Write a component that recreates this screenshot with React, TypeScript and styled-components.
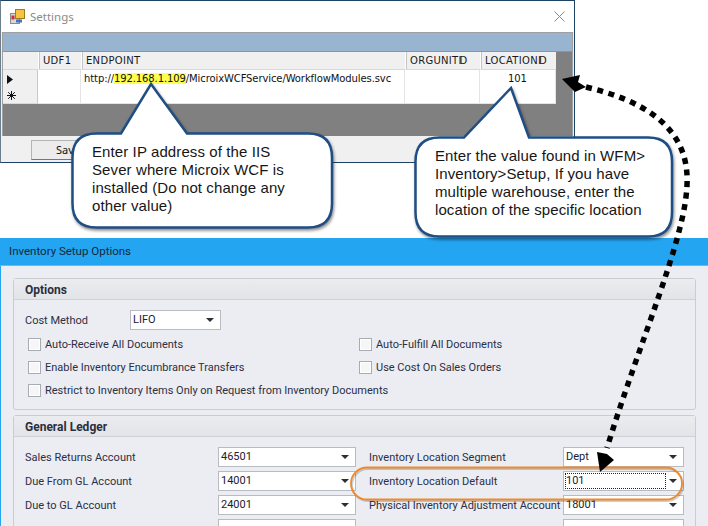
import React from 'react';
import styled, { createGlobalStyle } from 'styled-components';

const GlobalStyle = createGlobalStyle`
  html, body { margin: 0; padding: 0; background: #fff; }
  * { box-sizing: border-box; }
`;

const Page = styled.div`
  position: relative;
  width: 708px;
  height: 526px;
  overflow: hidden;
  background: #fff;
  font-family: 'DejaVu Sans', sans-serif;
`;

/* ---------- settings window ---------- */
const SettingsWindow = styled.div`
  width: 575px;
  height: 163px;
  background: #f0f0f0;
  border: 1px solid #1d4364;
  border-left-color: #6d7f8c;
  display: flex;
  flex-direction: column;
`;

const TitleBar = styled.div`
  height: 31px;
  flex: none;
  background: #fff;
  display: flex;
  align-items: center;
  padding: 0 9px 0 9px;
  gap: 5px;
`;

const TitleText = styled.span`
  flex: 1;
  font: 11.5px 'Noto Sans', sans-serif;
  color: #8a8a8a;
`;

const GridFrame = styled.div`
  height: 104px;
  flex: none;
  margin: 0 1px 0 1px;
  border: 1px solid #a0a0a0;
  border-bottom: none;
  background: #808080;
  display: flex;
  flex-direction: column;
`;

const BlueStrip = styled.div`
  height: 19px;
  flex: none;
  background: #99b4d1;
  border-bottom: 1px solid #8496aa;
`;

const GridRow = styled.div<{ $height: number }>`
  height: ${(p) => p.$height}px;
  flex: none;
  width: 553px;
  display: grid;
  grid-template-columns: 35px 43px 324px 75px 76px;
`;

const HeadCell = styled.div<{ $first?: boolean }>`
  background: #f0f0f0;
  border-left: ${(p) => (p.$first ? 'none' : '1px solid #fff')};
  box-shadow: ${(p) => (p.$first ? 'none' : 'inset 1px 0 0 #c4c4c4')};
  border-bottom: 1px solid #d8d8d8;
  padding-left: 4px;
  font-size: 10px;
  letter-spacing: 0.3px;
  line-height: 17px;
  color: #1a1a1a;
  white-space: nowrap;
`;

const TightId = styled.span`
  letter-spacing: -2px;
  margin-right: 2px;
`;

const RowHead = styled.div`
  background: #f0f0f0;
  border-bottom: 1px solid #d8d8d8;
  border-right: 1px solid #c8c8c8;
  display: flex;
  align-items: center;
  padding-left: 4px;
`;

const Cell = styled.div<{ $center?: boolean }>`
  background: #fff;
  border-right: 1px solid #e4e4e4;
  border-bottom: 1px solid #e4e4e4;
  padding-left: ${(p) => (p.$center ? 0 : 3)}px;
  text-align: ${(p) => (p.$center ? 'center' : 'left')};
  font-size: 10px;
  letter-spacing: -0.1px;
  line-height: 18px;
  color: #111;
  white-space: nowrap;
`;

const Marked = styled.span`
  background: #ffff4d;
`;

const ButtonBar = styled.div`
  flex: 1;
  padding: 4px 0 0 30px;
`;

const SaveButton = styled.div`
  width: 90px;
  height: 20px;
  background: #ececec;
  border: 1px solid #b4b4b4;
  border-right-color: #777;
  border-bottom-color: #777;
  padding-left: 24px;
  font: 11px/18px 'Noto Sans', sans-serif;
  color: #111;
`;

/* ---------- inventory dialog ---------- */
const Dialog = styled.div`
  margin-top: 75px;
  height: 288px;
  background: #ebedf2;
  border-left: 1px solid #24a5f2;
  display: flex;
  flex-direction: column;
  font-family: Roboto, 'Noto Sans', sans-serif;
`;

const DialogHeader = styled.div`
  height: 28px;
  flex: none;
  margin-left: -1px;
  background: #24a5f2;
  border-bottom: 1px solid #6fb9e8;
  padding-left: 9px;
  font-size: 11.5px;
  line-height: 26px;
  color: #12283a;
`;

const DialogBody = styled.div`
  padding: 12px 12px 0 12px;
  display: flex;
  flex-direction: column;
  gap: 5px;
`;

const Panel = styled.section<{ $height: number }>`
  height: ${(p) => p.$height}px;
  flex: none;
  width: 683px;
  border: 1px solid #c9ccd1;
  border-radius: 3px;
`;

const PanelTitle = styled.h2`
  margin: 0;
  height: 21px;
  padding-left: 11px;
  background: linear-gradient(#ebecef, #e3e4e8);
  border-bottom: 1px solid #cfd1d6;
  font-size: 12px;
  font-weight: 700;
  line-height: 22px;
  color: #2a2f3e;
`;

const Label = styled.span`
  font-size: 11px;
  color: #2b2f45;
  white-space: nowrap;
`;

const Select = styled.div<{ $width: number; $focus?: boolean }>`
  position: relative;
  width: ${(p) => p.$width}px;
  height: 20px;
  background: #fff;
  border: 1px solid #b8bbc2;
  padding-left: 2px;
  font-size: 11px;
  line-height: 18px;
  color: #1c2030;
`;

const FocusBox = styled.span`
  position: absolute;
  left: 1px;
  top: 1px;
  bottom: 1px;
  right: 17px;
  border: 1px dotted #222;
`;

const Caret = styled.span`
  position: absolute;
  right: 6px;
  top: 7px;
  border-left: 4px solid transparent;
  border-right: 4px solid transparent;
  border-top: 4px solid #2b2f3a;
`;

const CostRow = styled.div`
  display: flex;
  align-items: center;
  padding: 10px 0 0 11px;
  gap: 0;
`;

const CostLabel = styled(Label)`
  width: 105px;
`;

const CheckGrid = styled.div`
  display: grid;
  grid-template-columns: 331px 1fr;
  grid-auto-rows: 23px;
  padding: 0 0 0 14px;
  margin-top: 3px;
`;

const CheckItem = styled.div<{ $wide?: boolean }>`
  display: flex;
  align-items: center;
  gap: 4px;
  grid-column: ${(p) => (p.$wide ? '1 / 3' : 'auto')};
`;

const CheckBox = styled.span`
  width: 13px;
  height: 13px;
  flex: none;
  background: #f6f6f8;
  border: 1px solid #a9abb2;
  box-shadow: inset 0 0 0 1px #fff;
`;

const LedgerGrid = styled.div`
  display: grid;
  grid-template-columns: 193px 138px 13px 194px 121px;
  grid-auto-rows: 20px;
  row-gap: 4px;
  padding: 10px 0 0 11px;
  align-items: center;
`;

/* ---------- annotations ---------- */
const Overlay = styled.svg`
  position: absolute;
  inset: 0;
  pointer-events: none;
`;

const BubbleShape = styled.path`
  fill: #fff;
  stroke: #1f4e84;
  stroke-width: 2.5px;
  filter: drop-shadow(1px 2px 1.5px rgba(0, 0, 0, 0.45));
`;

const CalloutText = styled.p<{ $left: number; $top: number }>`
  position: absolute;
  left: ${(p) => p.$left}px;
  top: ${(p) => p.$top}px;
  margin: 0;
  font: 15px/18px 'Liberation Sans', Arial, sans-serif;
  letter-spacing: 0.1px;
  color: #161616;
  white-space: pre;
`;

const bubblePath = (
  x0: number,
  y0: number,
  x1: number,
  y1: number,
  r: number,
  tail: [number, number, number, number]
) => {
  const [baseL, tipX, tipY, baseR] = tail;
  return `M${x0 + r} ${y0} L${baseL} ${y0} L${tipX} ${tipY} L${baseR} ${y0} L${x1 - r} ${y0}
    Q${x1} ${y0} ${x1} ${y0 + r} L${x1} ${y1 - r} Q${x1} ${y1} ${x1 - r} ${y1}
    L${x0 + r} ${y1} Q${x0} ${y1} ${x0} ${y1 - r} L${x0} ${y0 + r} Q${x0} ${y0} ${x0 + r} ${y0} Z`;
};

const AppIcon = () => (
  <svg width="15" height="15" viewBox="0 0 15 15">
    <rect x="0.5" y="4.5" width="9" height="10" fill="#d8d8d8" stroke="#8a8a8a" />
    <rect x="5.5" y="0.5" width="9" height="9" fill="#f5c542" stroke="#a07a20" />
    <rect x="1.5" y="6.5" width="3" height="4" fill="#c9302c" />
    <rect x="6" y="10.5" width="6" height="3" fill="#3f73c4" />
  </svg>
);

const CloseIcon = () => (
  <svg width="11" height="11" viewBox="0 0 11 11">
    <path d="M0.5 0.5 L10.5 10.5 M10.5 0.5 L0.5 10.5" stroke="#8a8a8a" strokeWidth="1" />
  </svg>
);

const CurrentRowIcon = () => (
  <svg width="6" height="9" viewBox="0 0 6 9">
    <path d="M0 0 L6 4.5 L0 9 Z" fill="#111" />
  </svg>
);

const NewRowIcon = () => (
  <svg width="9" height="9" viewBox="0 0 9 9">
    <path d="M4.5 0 V9 M0 4.5 H9 M1.2 1.2 L7.8 7.8 M7.8 1.2 L1.2 7.8" stroke="#111" strokeWidth="1" />
  </svg>
);

const ledgerRows = [
  ['Sales Returns Account', '46501', 'Inventory Location Segment', 'Dept'],
  ['Due From GL Account', '14001', 'Inventory Location Default', '101'],
  ['Due to GL Account', '24001', 'Physical Inventory Adjustment Account', '18001'],
];

export default function App() {
  return (
    <Page>
      <GlobalStyle />
      <SettingsWindow>
        <TitleBar>
          <AppIcon />
          <TitleText>Settings</TitleText>
          <CloseIcon />
        </TitleBar>
        <GridFrame>
          <BlueStrip />
          <GridRow $height={18}>
            <HeadCell $first />
            <HeadCell>UDF1</HeadCell>
            <HeadCell>ENDPOINT</HeadCell>
            <HeadCell>
              ORGUNIT<TightId>ID</TightId>
            </HeadCell>
            <HeadCell>
              LOCATION<TightId>ID</TightId>
            </HeadCell>
          </GridRow>
          <GridRow $height={17}>
            <RowHead>
              <CurrentRowIcon />
            </RowHead>
            <Cell />
            <Cell>
              http://<Marked>192.168.1.109</Marked>/MicroixWCFService/WorkflowModules.svc
            </Cell>
            <Cell />
            <Cell $center>101</Cell>
          </GridRow>
          <GridRow $height={17}>
            <RowHead>
              <NewRowIcon />
            </RowHead>
            <Cell />
            <Cell />
            <Cell />
            <Cell />
          </GridRow>
        </GridFrame>
        <ButtonBar>
          <SaveButton>Save</SaveButton>
        </ButtonBar>
      </SettingsWindow>

      <Dialog>
        <DialogHeader>Inventory Setup Options</DialogHeader>
        <DialogBody>
          <Panel $height={132}>
            <PanelTitle>Options</PanelTitle>
            <CostRow>
              <CostLabel>Cost Method</CostLabel>
              <Select $width={91}>
                LIFO
                <Caret />
              </Select>
            </CostRow>
            <CheckGrid>
              <CheckItem>
                <CheckBox />
                <Label>Auto-Receive All Documents</Label>
              </CheckItem>
              <CheckItem>
                <CheckBox />
                <Label>Auto-Fulfill All Documents</Label>
              </CheckItem>
              <CheckItem>
                <CheckBox />
                <Label>Enable Inventory Encumbrance Transfers</Label>
              </CheckItem>
              <CheckItem>
                <CheckBox />
                <Label>Use Cost On Sales Orders</Label>
              </CheckItem>
              <CheckItem $wide>
                <CheckBox />
                <Label>Restrict to Inventory Items Only on Request from Inventory Documents</Label>
              </CheckItem>
            </CheckGrid>
          </Panel>
          <Panel $height={131}>
            <PanelTitle>General Ledger</PanelTitle>
            <LedgerGrid>
              {ledgerRows.map(([leftLabel, leftValue, rightLabel, rightValue]) => (
                <React.Fragment key={leftLabel}>
                  <Label>{leftLabel}</Label>
                  <Select $width={138}>
                    {leftValue}
                    <Caret />
                  </Select>
                  <span />
                  <Label>{rightLabel}</Label>
                  <Select $width={121}>
                    {rightValue}
                    {rightValue === '101' && <FocusBox />}
                    <Caret />
                  </Select>
                </React.Fragment>
              ))}
              {/* last row is cut off by the bottom of the screenshot, its labels can't be read */}
              <span />
              <Select $width={138} />
              <span />
              <span />
              <Select $width={121} />
            </LedgerGrid>
          </Panel>
        </DialogBody>
      </Dialog>

      <Overlay width="708" height="526" viewBox="0 0 708 526">
        <rect x="351" y="467.5" width="331" height="32" rx="16" fill="none" stroke="#00000030" strokeWidth="2" transform="translate(1 1.5)" />
        <rect x="351" y="467.5" width="331" height="32" rx="16" fill="none" stroke="#ee8a2a" strokeWidth="1.8" />
        <path
          d="M586 87 C640 100 690 125 687 185 C685 240 640 340 607 448"
          fill="none"
          stroke="#000"
          strokeWidth="5.5"
          strokeDasharray="6 5.6"
        />
        <polygon points="562,79 580,75 578,82 586,87 575,92" fill="#000" />
        <polygon points="600,472 597,452 607,454 614,460" fill="#000" />
        <BubbleShape d={bubblePath(72.5, 133.5, 332, 227.5, 24, [121, 151, 84, 187])} />
        <BubbleShape d={bubblePath(415.5, 137.5, 672, 236.5, 24, [464, 511, 88, 529])} />
      </Overlay>
      <CalloutText $left={92} $top={143}>
        {'Enter IP address of the IIS\nSever where Microix WCF is\ninstalled (Do not change any\nother value)'}
      </CalloutText>
      <CalloutText $left={435} $top={147}>
        {'Enter the value found in WFM>\nInventory>Setup, If you have\nmultiple warehouse, enter the\nlocation of the specific location'}
      </CalloutText>
    </Page>
  );
}
